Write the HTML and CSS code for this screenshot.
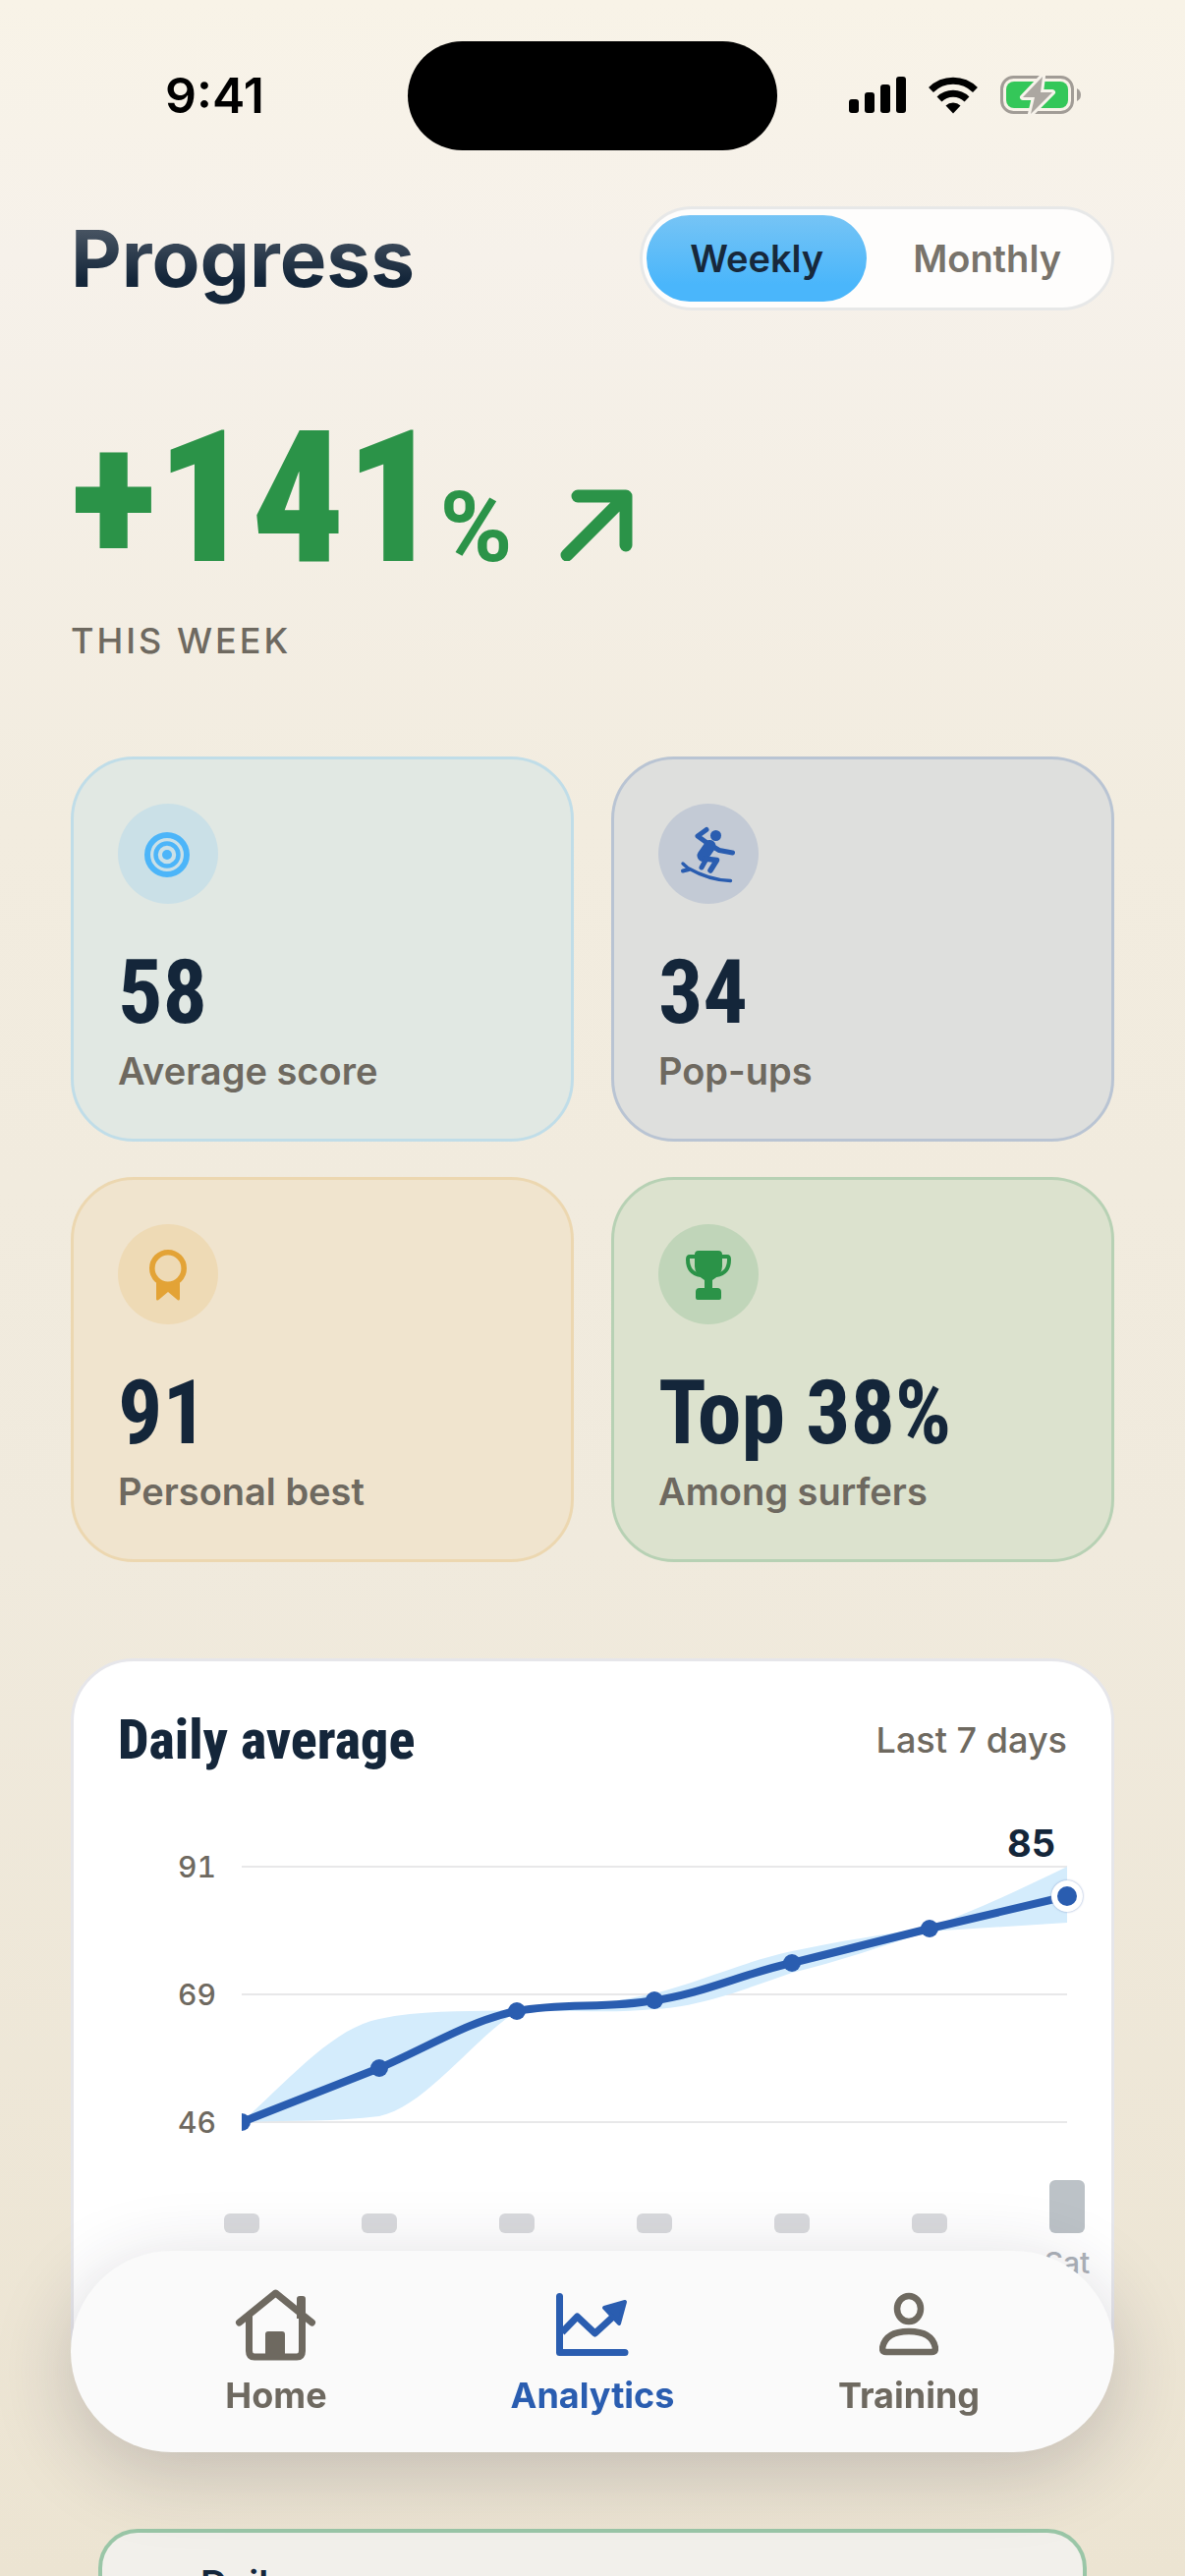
FILE: index.html
```html
<!DOCTYPE html>
<html lang="en">
<head>
  <meta charset="UTF-8">
  <meta name="viewport" content="width=device-width, initial-scale=1.0">
  <title>Progress</title>
  <link rel="stylesheet" href="styles.css">
</head>
<body>
  <div class="screen">
    <!-- Status bar -->
    <div class="status-bar">
      <span class="time">9:41</span>
      <div class="island"></div>
      <div class="status-icons">
        <svg width="58" height="38" viewBox="0 0 58 38">
          <rect x="0" y="23" width="10" height="14" rx="3"/>
          <rect x="16" y="16" width="10" height="21" rx="3"/>
          <rect x="32" y="8" width="10" height="29" rx="3"/>
          <rect x="48" y="0" width="10" height="37" rx="3"/>
        </svg>
        <svg width="52" height="38" viewBox="0 0 52 38">
          <g fill="none" stroke="#000" stroke-width="7">
            <path d="M3.500 13.500 A32 32 0 0 1 48.500 13.500"/>
            <path d="M12 23 A20 20 0 0 1 40 23"/>
          </g>
          <path d="M26 37.500 L18.500 29.500 A11 11 0 0 1 33.500 29.500 Z"/>
        </svg>
        <svg width="84" height="40" viewBox="0 0 84 40">
          <rect x="1.500" y="1.500" width="72" height="36" rx="12" fill="none" stroke="#a19c96" stroke-width="3"/>
          <path d="M78 13 Q82 15 82 19.500 Q82 24 78 26 Z" fill="#a19c96"/>
          <rect x="6" y="6" width="63" height="27" rx="8" fill="#34c759"/>
          <path d="M43 1 L23 22 H35 L31 39 L53 17 H41 Z" fill="#aca7a1" stroke="#f7f3eb" stroke-width="6" stroke-linejoin="round" paint-order="stroke"/>
        </svg>
      </div>
    </div>

    <main class="content">
      <header class="header">
        <h1>Progress</h1>
        <div class="toggle">
          <button class="toggle-btn active" type="button">Weekly</button>
          <button class="toggle-btn" type="button">Monthly</button>
        </div>
      </header>

      <!-- Change this week -->
      <section class="hero">
        <div class="hero-row">
          <span class="hero-value">+141</span>
          <span class="hero-unit">%</span>
          <svg class="hero-arrow" width="76" height="76" viewBox="0 0 76 76">
            <path d="M8 70 L66 12 M19 10 H68 V60" fill="none" stroke="#2b9348" stroke-width="13" stroke-linecap="round" stroke-linejoin="round"/>
          </svg>
        </div>
        <p class="hero-label">THIS WEEK</p>
      </section>

      <!-- Stat cards -->
      <section class="stats">
        <div class="stat sky">
          <svg class="stat-icon" viewBox="0 0 102 102">
            <g fill="none" stroke="#4cb5f9">
              <circle cx="50" cy="52" r="20" stroke-width="6"/>
              <circle cx="50" cy="52" r="11.500" stroke-width="4.500"/>
            </g>
            <circle cx="50" cy="52" r="5" fill="#4cb5f9"/>
          </svg>
          <span class="stat-value">58</span>
          <span class="stat-label">Average score</span>
        </div>
        <div class="stat ocean">
          <svg class="stat-icon" viewBox="9 8 102 102">
            <circle cx="67.500" cy="40.500" r="5.500" fill="#2a5db0"/>
            <g fill="none" stroke="#2a5db0" stroke-linecap="round" stroke-linejoin="round">
              <path d="M58 34.500 L49 41 L60 49 L71 55.500 L84.500 58" stroke-width="5"/>
              <path d="M61.500 51 L54.500 61" stroke-width="12"/>
              <path d="M56 64 L68.500 65.500 L62 76" stroke-width="5.500"/>
              <path d="M58 64 L53 73" stroke-width="5"/>
              <path d="M34 69 L39 73.500 Q61 86 82.500 86.500" stroke-width="3.400"/>
              <path d="M34 76.500 L40 75" stroke-width="4"/>
            </g>
          </svg>
          <span class="stat-value">34</span>
          <span class="stat-label">Pop-ups</span>
        </div>
        <div class="stat sand">
          <svg class="stat-icon" viewBox="0 0 102 102">
            <circle cx="51" cy="45" r="16.200" fill="none" stroke="#e3a336" stroke-width="5.600"/>
            <path d="M39 58 Q51 66 63 58 V76 Q62.500 78.500 60.500 77 L51 69 L41.500 77 Q39 78.500 39 76 Z" fill="#e3a336"/>
          </svg>
          <span class="stat-value">91</span>
          <span class="stat-label">Personal best</span>
        </div>
        <div class="stat green">
          <svg class="stat-icon" viewBox="0 0 102 102">
            <path d="M41 27 H61 Q65 27 65 31 V43 Q65 51 55 57 V65 H60 Q64 65 64 69 V75 Q64 77 62 77 H40 Q38 77 38 75 V69 Q38 65 42 65 H47 V57 Q37 51 37 43 V31 Q37 27 41 27 Z" fill="#2b9348"/>
            <path d="M38 33 H32 Q30 33 30 36 Q30 50 43 52 M64 33 H70 Q72 33 72 36 Q72 50 59 52" fill="none" stroke="#2b9348" stroke-width="4"/>
          </svg>
          <span class="stat-value">Top 38%</span>
          <span class="stat-label">Among surfers</span>
        </div>
      </section>

      <!-- Daily average chart -->
      <section class="chart-card">
        <div class="chart-head">
          <h2>Daily average</h2>
          <span class="chart-range">Last 7 days</span>
        </div>
        <svg class="chart" viewBox="0 0 966 542">
          <g class="grid">
            <line x1="126" y1="50" x2="966" y2="50"/>
            <line x1="126" y1="180" x2="966" y2="180"/>
            <line x1="126" y1="310" x2="966" y2="310"/>
          </g>
          <g class="axis" text-anchor="end">
            <text x="100" y="61">91</text>
            <text x="100" y="191">69</text>
            <text x="100" y="321">46</text>
          </g>
          <path class="band" d="M126 310 C173 268 219 214 266 205 C313 195 359 198 406 196 C453 195 499 189 546 179 C593 167 639 146 686 136 C733 126 779 119 826 112 C873 94 919 73 966 50 V107 C919 110 873 113 826 116 C779 130 733 147 686 158 C639 174 593 193 546 195 C499 200 453 195 406 197 C359 228 313 294 266 304 C219 310 173 308 126 310 Z"/>
          <clipPath id="plot"><rect x="126" y="0" width="880" height="340"/></clipPath>
          <g clip-path="url(#plot)">
            <path class="line" d="M126 310 L266 255 C313 235 359 206 406 197 C453 188 499 195 546 186 C593 180 639 158 686 148 L826 113 L966 80"/>
            <g class="dots">
              <circle cx="126" cy="310" r="9"/>
              <circle cx="266" cy="255" r="9"/>
              <circle cx="406" cy="197" r="9"/>
              <circle cx="546" cy="186" r="9"/>
              <circle cx="686" cy="148" r="9"/>
              <circle cx="826" cy="113" r="9"/>
            </g>
          </g>
          <circle class="today" cx="966" cy="80" r="13"/>
          <text class="today-value" x="954" y="40" text-anchor="end">85</text>
          <g class="bars">
            <rect x="108" y="403" width="36" height="20" rx="6"/>
            <rect x="248" y="403" width="36" height="20" rx="6"/>
            <rect x="388" y="403" width="36" height="20" rx="6"/>
            <rect x="528" y="403" width="36" height="20" rx="6"/>
            <rect x="668" y="403" width="36" height="20" rx="6"/>
            <rect x="808" y="403" width="36" height="20" rx="6"/>
            <rect class="bar-today" x="948" y="369" width="36" height="54" rx="6"/>
          </g>
          <text class="day" x="966" y="464" text-anchor="middle">Sat</text>
        </svg>
      </section>

      <section class="daily-card">
        <h3>Daily</h3>
      </section>
    </main>

    <!-- Tab bar -->
    <nav class="tab-bar">
      <a class="tab" href="#home">
        <svg width="84" height="74" viewBox="0 0 84 74">
          <g fill="none" stroke="#6e6960" stroke-width="7" stroke-linecap="round" stroke-linejoin="round">
            <path d="M4.500 34 L41.500 4 L78.500 34"/>
            <path d="M14.500 28 V63 Q14.500 69 20 69 H63 Q68.500 69 68.500 63 V28"/>
          </g>
          <path d="M63 10 Q63 7 66 7 H69 Q72 7 72 10 V30 H63 Z M31 69 V46 Q31 43 34 43 H48 Q51 43 51 46 V69 Z" fill="#6e6960"/>
        </svg>
        <span>Home</span>
      </a>
      <a class="tab active" href="#analytics">
        <svg width="74" height="74" viewBox="0 -4 74 74">
          <path d="M3.500 3.500 V60.500 H70" fill="none" stroke="#2a5db0" stroke-width="7" stroke-linecap="round" stroke-linejoin="round"/>
          <path d="M6 40 L21.500 24 L39.500 41 L58 24" fill="none" stroke="#2a5db0" stroke-width="7" stroke-linejoin="round"/>
          <path d="M70 9 L49 15 L64 31 Z" fill="#2a5db0" stroke="#2a5db0" stroke-width="4" stroke-linejoin="round"/>
        </svg>
        <span>Analytics</span>
      </a>
      <a class="tab" href="#training">
        <svg width="60" height="74" viewBox="0 -4 60 74">
          <g fill="none" stroke="#6e6960" stroke-width="6.500">
            <ellipse cx="30" cy="16" rx="12" ry="13"/>
            <path d="M7 60 Q3 60 3 56 Q6 39 30 39 Q54 39 57 56 Q57 60 53 60 Z"/>
          </g>
        </svg>
        <span>Training</span>
      </a>
    </nav>
  </div>
</body>
</html>
```
FILE: styles.css
```css
* {
  box-sizing: border-box;
}
body {
  margin: 0;
  font-family: Inter, "Liberation Sans", sans-serif;
  color: #14263a;
}
h1, h2, h3, p {
  margin: 0;
}
.screen {
  height: 100vh;
  overflow: hidden;
  background: linear-gradient(#f8f3e7 0, #f6f1ea 10%, #f2ecdf 32%, #f0eadd 60%, #ece4d2 100%);
}

/* Status bar */
.status-bar {
  display: grid;
  grid-template-columns: 1fr 376px 1fr;
  align-items: center;
  height: 194px;
}
.time {
  padding-left: 22px;
  text-align: center;
  font-size: 50px;
  font-weight: 600;
  color: #000;
}
.island {
  height: 111px;
  border-radius: 56px;
  background: #000;
}
.status-icons {
  display: flex;
  justify-content: center;
  align-items: center;
  gap: 22px;
  padding-right: 32px;
}

.content {
  padding: 16px 72px 0;
}

/* Title and period toggle */
.header {
  display: flex;
  justify-content: space-between;
  align-items: center;
  margin-bottom: 96px;
}
h1 {
  font-size: 80px;
  font-weight: 700;
  line-height: 106px;
  background: linear-gradient(#4a5664 20%, #14263a 70%);
  -webkit-background-clip: text;
  background-clip: text;
  color: transparent;
}
.toggle {
  display: flex;
  height: 106px;
  padding: 6px 4px;
  border: 3px solid #e7e8e8;
  border-radius: 53px;
  background: #fefdfc;
}
.toggle-btn {
  padding: 0 47px;
  border: none;
  border-radius: 44px;
  background: none;
  font-family: inherit;
  font-size: 38px;
  font-weight: 600;
  color: #78736b;
  cursor: pointer;
}
.toggle-btn.active {
  padding: 0 44px;
  background: linear-gradient(#76c4f5, #4ab6fb 80%);
  color: #17283b;
}

/* Change this week */
.hero {
  margin-bottom: 96px;
  color: #2b9348;
}
.hero-row {
  display: flex;
  align-items: baseline;
  height: 190px;
  margin-bottom: 28px;
  font-family: "Roboto Condensed", Roboto, sans-serif;
  line-height: 190px;
}
.hero-value {
  font-size: 188px;
  font-weight: 900;
}
.hero-unit {
  font-family: Roboto, sans-serif;
  font-size: 100px;
  font-weight: 700;
}
.hero-arrow {
  margin-left: 48px;
}
.hero-label {
  font-size: 36px;
  font-weight: 500;
  line-height: 44px;
  letter-spacing: 3px;
  color: #6e6960;
}

/* Stat cards */
.stats {
  display: grid;
  grid-template-columns: 1fr 1fr;
  gap: 36px 38px;
  margin-bottom: 98px;
}
.stat {
  display: flex;
  flex-direction: column;
  align-items: flex-start;
  padding: 45px;
  border: 3px solid;
  border-radius: 64px;
}
.stat-icon {
  width: 102px;
  height: 102px;
  margin-bottom: 46px;
  border-radius: 50%;
}
.stat-value {
  margin-bottom: 10px;
  font-family: "Roboto Condensed", Roboto, sans-serif;
  font-size: 90px;
  font-weight: 700;
  line-height: 90px;
}
.stat-label {
  font-size: 38px;
  font-weight: 600;
  line-height: 48px;
  color: #6e6960;
}
.sky {
  background: #e1e8e3;
  border-color: #c0dde8;
}
.sky .stat-icon {
  background: #cae0e7;
}
.ocean {
  background: #dedfdd;
  border-color: #b9c4d3;
}
.ocean .stat-icon {
  background: #c3cad5;
}
.sand {
  background: #f0e4ce;
  border-color: #ecd7b0;
}
.sand .stat-icon {
  background: #eedab5;
}
.green {
  background: #dce2ce;
  border-color: #b7d1b4;
}
.green .stat-icon {
  background: #c0d5b9;
}

/* Chart */
.chart-card {
  margin-bottom: 134px;
  padding: 45px 45px 48px;
  border: 3px solid #e6e6ea;
  border-radius: 64px;
  background: #fff;
  height: 752px;
}
.chart-head {
  display: flex;
  justify-content: space-between;
  align-items: center;
  margin-bottom: 44px;
}
h2 {
  font-family: "Roboto Condensed", Roboto, sans-serif;
  font-size: 56px;
  font-weight: 800;
  line-height: 70px;
}
.chart-range {
  font-size: 36px;
  font-weight: 500;
  color: #6e6960;
}
.chart {
  display: block;
  width: 100%;
  overflow: visible;
}
.grid line {
  stroke: #e8e8e9;
  stroke-width: 2;
}
.axis text {
  font-size: 30px;
  font-weight: 500;
  font-variant-numeric: tabular-nums;
  fill: #6e6960;
}
.band {
  fill: #d4ecfc;
}
.line {
  fill: none;
  stroke: #2a5db0;
  stroke-width: 8;
}
.dots {
  fill: #2a5db0;
}
.today {
  fill: #2a5db0;
  stroke: #fff;
  stroke-width: 6;
  filter: drop-shadow(0 0 1px #8ea5d0);
}
.today-value {
  font-size: 38px;
  font-weight: 700;
  fill: #14263a;
}
.bars {
  fill: #d9dadd;
}
.bar-today {
  fill: #bcc2c7;
}
.day {
  font-size: 30px;
  font-weight: 500;
  fill: #adb2b9;
}

.daily-card {
  height: 200px;
  margin: 0 28px;
  padding: 28px 100px;
  border: 4px solid #9ac6a7;
  border-radius: 40px;
  background: #f2f0eb;
}
h3 {
  font-size: 38px;
  font-weight: 600;
  line-height: 48px;
}

/* Tab bar */
.tab-bar {
  position: fixed;
  right: 72px;
  bottom: 126px;
  left: 72px;
  display: flex;
  height: 205px;
  padding: 39px 48px 0;
  border-radius: 103px;
  background: #fafafa;
  box-shadow: 0 20px 80px rgba(40, 38, 60, 0.22);
}
.tab {
  flex: 1;
  display: flex;
  flex-direction: column;
  align-items: center;
  gap: 12px;
  font-size: 36px;
  font-weight: 700;
  line-height: 44px;
  color: #6e6960;
  text-decoration: none;
}
.tab.active {
  color: #2a5db0;
}
```
